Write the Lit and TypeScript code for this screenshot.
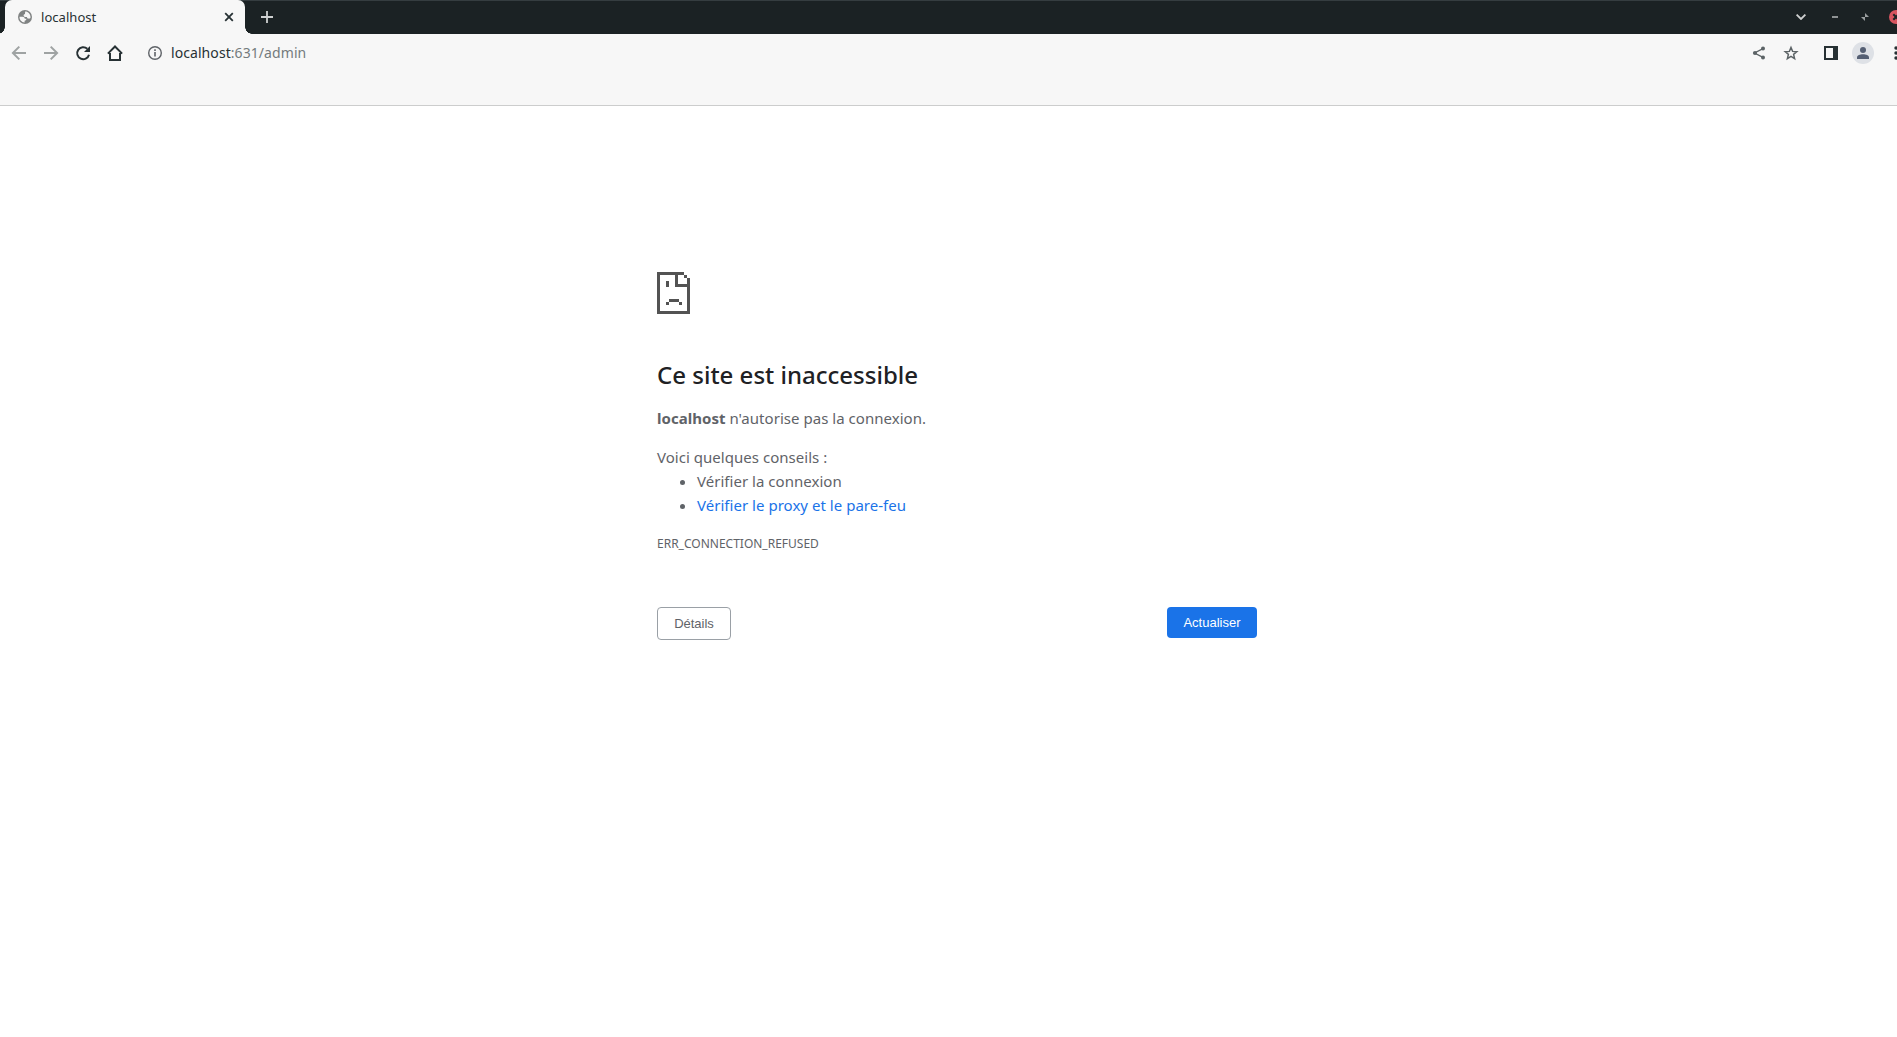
import { LitElement, html, css, svg } from "lit";
import { customElement } from "lit/decorators.js";

const icon = (w: number, h: number, body: unknown) =>
  html`<svg width=${w} height=${h} viewBox="0 0 ${w} ${h}" fill="none">${body}</svg>`;

const globe = icon(14, 14, svg`<circle cx="7" cy="7" r="7" fill="#808383"/><path fill="#f7f7f7" d="M7.200 1.500C10.200 1.500 12.500 4 12.500 7c0 .4 0 .8-.1 1.100-.6.500-1.300.6-1.900.5-1 0-1.500-.7-1.500-1.600H7.200c-1.100 0-1.600-.6-1.600-1.400 0-.9.500-1.400 1.400-1.500.2-.9-.1-1.700.2-2.600zM1.500 6.800h3.100c1.300 0 2.100.8 2.200 1.900h1.600c0 1.400-.9 1.900-1.800 2v1.800C3.500 12.300 1.400 9.800 1.500 6.800z"/>`);
const close = icon(10, 10, svg`<path stroke="#273134" stroke-width="1.8" d="M1.200 1.200l7.600 7.600M8.800 1.200l-7.600 7.600"/>`);
const plus = icon(12, 12, svg`<path stroke="#cfd1d1" stroke-width="1.800" d="M6 0v12M0 6h12"/>`);
const back = icon(16, 16, svg`<path stroke="#9fa3a3" stroke-width="2" d="M15 8H2.500M8.300 1.600L1.900 8l6.400 6.400"/>`);
const forward = icon(16, 16, svg`<path stroke="#9fa3a3" stroke-width="2" d="M1 8h12.500M7.700 1.600L14.100 8l-6.400 6.400"/>`);
const reload = icon(16, 16, svg`<path stroke="#273134" stroke-width="2" d="M14 9.700A6 6 0 1 1 12.300 3.800"/><path fill="#273134" d="M15 1v6H9z"/>`);
const home = icon(16, 16, svg`<path stroke="#273134" stroke-width="2" d="M3 8v7h10V8M.9 8.600L8 1.500l7.100 7.100"/>`);
const info = icon(16, 16, svg`<circle cx="8" cy="8" r="6.300" stroke="#5f6368" stroke-width="1.400"/><path stroke="#5f6368" stroke-width="1.600" d="M8 7v4.500M8 4.300v1.700"/>`);
const share = icon(14, 14, svg`<path stroke="#5c6366" stroke-width="1.300" d="M11.500 2.300L2.500 7l9 4.700"/><g fill="#5c6366"><circle cx="11" cy="2.500" r="2"/><circle cx="3" cy="7" r="2.100"/><circle cx="11" cy="11.500" r="2"/></g>`);
const star = icon(16, 16, svg`<path stroke="#5c6366" stroke-width="1.500" d="M8 2.500l1.600 3.900 4.200.3-3.200 2.700 1 4.200L8 11.400l-3.600 2.200 1-4.200-3.200-2.700 4.200-.3z"/>`);
const panel = icon(14, 14, svg`<path fill="#273134" fill-rule="evenodd" d="M0 0h14v14H0zM2 2v10h7V2z"/>`);
const person = icon(12, 12, svg`<circle cx="6" cy="3" r="3" fill="#555f73"/><path fill="#555f73" d="M0 12v-1.500C0 8.500 3 7.300 6 7.300s6 1.200 6 3.200V12z"/>`);
const dots = icon(4, 14, svg`<g fill="#273134"><circle cx="2" cy="2" r="1.700"/><circle cx="2" cy="7" r="1.700"/><circle cx="2" cy="12" r="1.700"/></g>`);
const chevron = icon(10, 6, svg`<path stroke="#cfd1d1" stroke-width="1.800" d="M.6.6L5 5 9.400.6"/>`);
const restore = icon(8, 8, svg`<path fill="#9a9e9f" d="M4 0v4h4zM0 4h4v4z"/>`);
const closeWin = icon(14, 14, svg`<circle cx="7" cy="7" r="7" fill="#d8545f"/><path stroke="#1b2224" stroke-width="2" d="M4.300 4.300l5.400 5.400M9.700 4.300L4.300 9.700"/>`);
const sadPage = icon(33, 42, svg`<path fill="#535353" d="M0 0h27v3H3v36h27V15H18V3h3v9h9V6h3v36H0zM27 3h3v3h-3zM9 9h3v6H9zM12 27h10v3H12zM9 30h3v3H9zM22 30h3v3h-3z"/>`);

@customElement("browser-chrome")
class BrowserChrome extends LitElement {
  static styles = css`
    :host { display: block; font-family: "Noto Sans", sans-serif; }
    svg { display: block; flex: none; }
    .strip { display: flex; align-items: center; height: 34px; box-sizing: border-box; padding-left: 5px; background: #1b2224; box-shadow: inset 0 1px #353d40; overflow: hidden; }
    .tab { position: relative; display: flex; align-items: center; width: 240px; height: 34px; box-sizing: border-box; padding: 0 11px 0 13px; background: #f7f7f7; border-radius: 7px 7px 0 0; font-size: 13px; color: #273134; }
    .tab::before, .tab::after { content: ""; position: absolute; bottom: 0; width: 7px; height: 7px; }
    .tab::before { left: -7px; background: radial-gradient(circle at 0 0, transparent 6.500px, #f7f7f7 7px); }
    .tab::after { right: -7px; background: radial-gradient(circle at 100% 0, transparent 6.500px, #f7f7f7 7px); }
    .label { flex: 1; margin-left: 9px; line-height: 18px; letter-spacing: 0.04px; }
    .add { margin-left: 16px; }
    .window { display: flex; align-items: center; margin-left: auto; margin-right: -6px; }
    .min { width: 6px; height: 2px; margin: 0 23px 0 26px; background: #8f9394; }
    .end { margin-left: 20px; }
    .bar { display: flex; align-items: center; height: 38px; padding: 0 0 0 11px; background: #f7f7f7; overflow: hidden; }
    .nav { display: flex; gap: 16px; }
    .info { margin-left: 24px; }
    .url { margin-left: 8px; font-size: 14px; line-height: 20px; letter-spacing: 0.07px; color: #273134; }
    .path { color: #747b7d; }
    .tools { display: flex; align-items: center; margin-left: auto; margin-right: -1px; }
    .star { margin: 0 25px 0 17px; }
    .avatar { display: flex; align-items: center; justify-content: center; width: 22px; height: 22px; margin: 0 20px 0 14px; border-radius: 50%; background: #dee1e6; }
    .shelf { height: 33px; background: #f7f7f7; border-bottom: 1px solid #cccdcd; }
  `;
  render() {
    return html`
      <div class="strip">
        <div class="tab">${globe}<span class="label">localhost</span>${close}</div>
        <div class="add">${plus}</div>
        <div class="window">${chevron}<div class="min"></div>${restore}<div class="end">${closeWin}</div></div>
      </div>
      <div class="bar">
        <div class="nav">${back}${forward}${reload}${home}</div>
        <div class="info">${info}</div>
        <div class="url">localhost<span class="path">:631/admin</span></div>
        <div class="tools">${share}<div class="star">${star}</div>${panel}<div class="avatar">${person}</div>${dots}</div>
      </div>
      <div class="shelf"></div>`;
  }
}

@customElement("error-page")
class ErrorPage extends LitElement {
  static styles = css`
    :host { display: block; width: 600px; margin: 0 auto; padding: 166px 0 0 17px; font: 15px/24px "Noto Sans", sans-serif; color: #5f6368; }
    svg { display: block; }
    h1 { margin: 46px 0 16px; font-size: 24px; line-height: 30px; font-weight: 500; color: #202124; }
    p { margin: 0; }
    p, li { letter-spacing: 0.03px; }
    .tips { margin-top: 15px; }
    ul { margin: 0; padding: 0 0 0 40px; }
    a { color: #1a73e8; text-decoration: none; }
    .code { margin-top: 15px; font-size: 12px; }
    .buttons { display: flex; justify-content: space-between; align-items: flex-start; margin-top: 51px; }
    button { box-sizing: border-box; margin: 0; border: 0; border-radius: 4px; padding: 8px 16px; background: #1a73e8; color: #fff; font: 13px/15px "Liberation Sans", Arial, sans-serif; width: 90px; height: 31px; }
    .details { width: 74px; height: 33px; border: 1px solid #9aa0a6; background: #fff; color: #5f6368; }
  `;
  render() {
    return html`
      ${sadPage}
      <h1>Ce site est inaccessible</h1>
      <p><strong>localhost</strong> n'autorise pas la connexion.</p>
      <p class="tips">Voici quelques conseils :</p>
      <ul><li>Vérifier la connexion</li><li><a>Vérifier le proxy et le pare-feu</a></li></ul>
      <div class="code">ERR_CONNECTION_REFUSED</div>
      <div class="buttons"><button class="details">Détails</button><button>Actualiser</button></div>`;
  }
}

@customElement("app-root")
class AppRoot extends LitElement {
  static styles = css`
    :host { display: block; height: 100vh; background: #fff; overflow: hidden; }
  `;
  render() {
    return html`<browser-chrome></browser-chrome><error-page></error-page>`;
  }
}
